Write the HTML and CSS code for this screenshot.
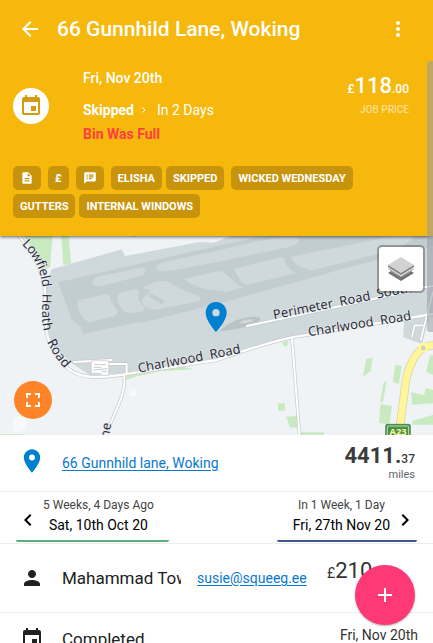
FILE: index.html
```html
<!DOCTYPE html>
<html lang="en">
<head>
<meta charset="utf-8">
<meta name="viewport" content="width=device-width, initial-scale=1">
<title>66 Gunnhild Lane, Woking</title>
<link rel="stylesheet" href="styles.css">
</head>
<body>
<header class="header">
  <div class="bar">
    <button class="icon-button" aria-label="Back"><svg width="24" height="24" viewBox="0 0 24 24" fill="currentColor"><path d="M20 11H7.83l5.59-5.59L12 4l-8 8 8 8 1.41-1.41L7.83 13H20z"/></svg></button>
    <h1 class="title">66 Gunnhild Lane, Woking</h1>
    <button class="icon-button" aria-label="More"><svg width="24" height="24" viewBox="0 0 24 24" fill="currentColor"><circle cx="12" cy="6" r="2"/><circle cx="12" cy="12" r="2"/><circle cx="12" cy="18" r="2"/></svg></button>
  </div>
  <section class="job">
    <span class="job-icon"><svg width="24" height="24" viewBox="0 0 24 24" fill="currentColor"><path d="M17 12h-5v5h5v-5zM16 1v2H8V1H6v2H5c-1.11 0-2 .9-2 2v14c0 1.1.89 2 2 2h14c1.1 0 2-.9 2-2V5c0-1.1-.9-2-2-2h-1V1h-2zm3 18H5V8h14v11z"/></svg></span>
    <div class="job-text">
      <p class="job-date">Fri, Nov 20th</p>
      <p class="job-state"><b>Skipped</b><svg width="6" height="8" viewBox="0 0 6 8" fill="none" stroke="currentColor"><path d="M1.500 1.500 4 4 1.500 6.500"/></svg><span>In 2 Days</span></p>
      <p class="job-reason">Bin Was Full</p>
    </div>
    <div class="price">
      <p class="price-value"><small>£</small>118<small>.00</small></p>
      <p class="price-label">JOB PRICE</p>
    </div>
  </section>
  <div class="tags">
    <span class="tag tag-icon"><svg width="14" height="14" viewBox="0 0 24 24" fill="currentColor"><path d="M14 2H6c-1.1 0-2 .9-2 2v16c0 1.100.9 2 2 2h12c1.100 0 2-.9 2-2V8l-6-6zm2 16H8v-2h8v2zm0-4H8v-2h8v2zm-3-5V3.500L18.500 9H13z"/></svg></span>
    <span class="tag tag-end">£</span>
    <span class="tag tag-icon"><svg width="14" height="14" viewBox="0 0 24 24" fill="currentColor"><path d="M20 2H4c-1.100 0-2 .9-2 2v18l4-4h14c1.100 0 2-.9 2-2V4c0-1.100-.9-2-2-2zM8 14H6v-2h2v2zm0-3H6V9h2v2zm0-3H6V6h2v2zm7 6h-5v-2h5v2zm3-3h-8V9h8v2zm0-3h-8V6h8v2z"/></svg></span>
    <span class="tag">ELISHA</span>
    <span class="tag tag-end">SKIPPED</span>
    <span class="tag">WICKED WEDNESDAY</span>
    <span class="tag">GUTTERS</span>
    <span class="tag">INTERNAL WINDOWS</span>
  </div>
</header>

<section class="map" aria-label="Map">
  <svg class="map-canvas" viewBox="0 18 1299 597" preserveAspectRatio="xMidYMid slice">
    <defs>
      <path id="lowfield" d="M72 36C108 72 132 110 138 172L136 260C138 300 146 324 156 342C170 372 190 400 230 436"/>
      <path id="charlwood-west" d="M416 428 730 368"/>
      <path id="charlwood-east" d="M926 319 1250 267"/>
      <path id="perimeter" d="M822 268 1270 178"/>
    </defs>
    <rect width="1299" height="640" fill="#eff3f6"/>
    <g fill="#c9eac0">
      <path d="M72 18H158L150 112 128 122 112 80ZM184 18H206L214 102 190 104ZM398 18H408L406 22H396ZM376 436 540 408 580 418 480 424 400 442 376 452ZM0 613H72V620H0Z"/>
      <path d="M843 338 866 332 864 344 855 350ZM834 520H855V542H834ZM858 560 892 558 893 594 870 592ZM900 607H972V620H900ZM1099 386 1118 384 1112 424 1088 440ZM1186 404 1206 407 1196 462 1178 455ZM1215 410 1230 412 1204 530 1196 528ZM1152 454 1160 456 1148 518 1140 514ZM1141 522 1176 528 1168 584 1137 578ZM1290 376H1299V434L1278 426ZM1234 486 1272 496 1278 474 1299 480V520L1236 524ZM1236 574 1299 554V584H1238Z"/>
    </g>
    <path fill="#cfd8db" d="M155 118 365 58 376 78 600 36 640 38 694 18H1299V262L1283 255 876 322 800 340 651 392 380 430 270 436 215 400 160 350 140 300 130 190Z"/>
    <path fill="#cfd8db" d="M1212 266 1290 252 1266 342 1210 322Z"/>
    <path fill="#c2cdd0" d="M175 157 651 48 790 18H1190L1299 18V48L1060 108 651 222 418 280 416 276 250 312 240 288 216 270 190 200Z"/>
    <g fill="#cfd8db">
      <path d="M278 158C276 146 290 140 306 137L420 114C436 112 442 118 436 126C430 138 420 140 396 144L306 168C288 170 280 168 278 158Z"/>
      <path d="M232 218C232 214 238 210 248 208L318 193C328 192 330 200 334 214L352 242C354 252 348 258 338 260L270 276C252 278 232 236 232 218Z"/>
      <path d="M352 206C350 194 358 188 368 186L404 178C414 176 418 182 416 190C412 202 416 212 428 226L434 242 400 250C370 254 356 226 352 206Z"/>
      <path d="M426 212C426 202 452 186 452 182C450 176 428 180 432 172C440 164 458 158 476 154C500 150 516 160 540 176L596 198C608 206 600 214 586 216L470 238C448 242 428 230 426 212Z"/>
      <path d="M470 120C464 104 480 100 510 92L651 62 770 34 850 22C920 18 900 40 870 50L680 90 540 118C510 124 484 126 470 120Z"/>
      <path d="M550 148 660 122C690 134 700 160 730 172L680 186 620 178C590 174 568 156 550 148Z"/>
      <path d="M700 116 850 80C862 98 850 110 890 130L740 164C716 156 714 132 700 116Z"/>
      <path d="M872 80 1180 18H1246L1206 54 930 122C890 110 880 96 872 80Z"/>
    </g>
    <path d="M450 194 490 218M856 78C862 104 884 116 920 122M1196 64 1256 20" stroke="#c2cdd0" stroke-width="12" fill="none"/>
    <path fill="#b9c2c5" d="M660 304C680 280 720 262 760 260C790 260 786 272 760 282C740 292 700 300 660 304Z"/>
    <path fill="#cfd8db" d="M716 280C728 270 744 268 758 268C762 274 742 282 716 280Z"/>
    <g fill="none" stroke="#c7c9ca" stroke-linecap="round" stroke-linejoin="round">
      <path stroke-width="11" d="M56 16C90 60 126 110 134 172L138 290C144 360 196 436 270 440C340 444 390 430 430 424L651 390C720 366 800 338 876 322L1299 252"/>
      <path stroke-width="10" d="M372 434C382 490 340 550 316 620M876 326 899 620M222 396 336 390M328 402H380V432M1299 168 1270 172M741 288 1200 190"/>
      <path stroke-width="9" d="M1299 186 1262 330M1236 320 1244 286H1268"/>
    </g>
    <g fill="none" stroke="#fff" stroke-linecap="round" stroke-linejoin="round">
      <path stroke-width="7" d="M56 16C90 60 126 110 134 172L138 290C144 360 196 436 270 440C340 444 390 430 430 424L651 390C720 366 800 338 876 322L1299 252"/>
      <path stroke-width="6" d="M372 434C382 490 340 550 316 620M876 326 899 620M222 396 336 390M328 402H380V432M1299 168 1270 172M741 288 1200 190"/>
      <path stroke-width="5" d="M1299 186 1262 330M1236 320 1244 286H1268"/>
    </g>
    <path fill="#fff" stroke="#c7c9ca" stroke-width="2" d="M274 392H326V436H310L300 430H274Z"/>
    <path fill="none" stroke="#c7c9ca" stroke-width="3" d="M282 404H318M282 412H304M280 420 322 416M304 424H322"/>
    <path fill="#f6f8fa" d="M388 476H410V498H388ZM40 562 78 560V598L36 612Z"/>
    <path fill="none" stroke="#d6d1a0" stroke-width="25" d="M1299 346C1250 348 1230 400 1218 450L1196 620"/>
    <path fill="none" stroke="#fff59b" stroke-width="21" d="M1299 346C1250 348 1230 400 1218 450L1196 620"/>
    <circle cx="1270" cy="353" r="15" fill="#fff59b"/>
    <circle cx="1270" cy="354" r="5" fill="#cfd8db" stroke="#aeb0a0" stroke-width="2"/>
    <rect x="1157" y="583" width="74" height="46" rx="5" fill="#48914a" stroke="#34723a" stroke-width="2"/>
    <rect x="1162" y="588" width="64" height="40" rx="3" fill="none" stroke="#fff" stroke-width="2"/>
    <text class="road-number" x="1194" y="615">A23</text>
    <g class="road-name">
      <text dy="10"><textPath href="#lowfield">Lowfield &#160;Heath &#160;&#160;Road</textPath></text>
      <text><textPath href="#charlwood-west">Charlwood &#160;Road</textPath></text>
      <text><textPath href="#charlwood-east">Charlwood &#160;Road</textPath></text>
      <text><textPath href="#perimeter">Perimeter &#160;Road &#160;South</textPath></text>
      <text transform="translate(326 626) rotate(-80)">ne</text>
    </g>
    <path fill="#0080d0" d="M648 216C630 216 617 230 617 248C617 272 648 306 648 306S680 272 680 248C680 230 666 216 648 216ZM648 259A11 11 0 1 1 648 237A11 11 0 0 1 648 259Z"/>
  </svg>
  <button class="layers" aria-label="Layers"><svg width="26" height="26" viewBox="0 0 26 26"><path fill="#747474" d="M0 17 3 15 13 21 23 15 26 17 13 25Z"/><path fill="#9b9b9b" d="M0 13 3 11 13 17 23 11 26 13 13 21Z"/><path fill="#fff" d="M0 11 13 19 26 11V12L13 20 0 12Z"/><path fill="#d2d2d2" d="M0 9 13 1 26 9 13 17Z"/><path fill="#858585" d="M0 9 13 17 26 9V11L13 19 0 11Z"/></svg></button>
  <button class="expand" aria-label="Full screen"><svg width="24" height="24" viewBox="0 0 24 24" fill="currentColor"><path d="M7 14H5v5h5v-2H7v-3zm-2-4h2V7h3V5H5v5zm12 7h-3v2h5v-5h-2v3zM14 5v2h3v3h2V5h-5z"/></svg></button>
</section>

<main class="list">
  <section class="row address-row">
    <svg class="row-icon" width="28" height="28" viewBox="0 0 24 24" fill="#0080d0"><path d="M12 2C8.130 2 5 5.130 5 9c0 5.250 7 13 7 13s7-7.750 7-13c0-3.870-3.130-7-7-7zm0 9.500a2.500 2.500 0 0 1 0-5 2.500 2.500 0 0 1 0 5z"/></svg>
    <a class="link" href="#">66 Gunnhild lane, Woking</a>
    <div class="distance"><p class="distance-value">4411.<small>37</small></p><p class="distance-unit">miles</p></div>
  </section>
  <nav class="row visits">
    <button class="visit visit-last">
      <svg width="24" height="24" viewBox="0 0 24 24"><path d="M15.410 7.410 14 6l-6 6 6 6 1.410-1.410L10.830 12z"/></svg>
      <span class="visit-text"><span class="visit-ago">5 Weeks, 4 Days Ago</span><span>Sat, 10th Oct 20</span></span>
    </button>
    <button class="visit visit-next">
      <span class="visit-text"><span class="visit-ago">In 1 Week, 1 Day</span><span>Fri, 27th Nov 20</span></span>
      <svg width="24" height="24" viewBox="0 0 24 24"><path d="M10 6 8.590 7.410 13.170 12l-4.580 4.590L10 18l6-6z"/></svg>
    </button>
  </nav>
  <section class="row contact-row">
    <svg class="row-icon" width="24" height="24" viewBox="0 0 24 24" fill="#212121"><path d="M12 12c2.210 0 4-1.790 4-4s-1.790-4-4-4-4 1.790-4 4 1.790 4 4 4zm0 2c-2.670 0-8 1.340-8 4v2h16v-2c0-2.660-5.330-4-8-4z"/></svg>
    <span class="row-title contact-name">Mahammad Towne</span>
    <a class="link" href="#">susie@squeeg.ee</a>
    <p class="balance"><small>£</small>210<small class="pence">.00</small></p>
  </section>
  <section class="row status-row">
    <svg class="row-icon" width="24" height="24" viewBox="0 0 24 24" fill="#212121"><path d="M17 12h-5v5h5v-5zM16 1v2H8V1H6v2H5c-1.110 0-2 .9-2 2v14c0 1.100.89 2 2 2h14c1.100 0 2-.9 2-2V5c0-1.100-.9-2-2-2h-1V1h-2zm3 18H5V8h14v11z"/></svg>
    <span class="row-title">Completed</span>
    <span class="status-date">Fri, Nov 20th</span>
  </section>
</main>
<button class="fab" aria-label="Add"><svg width="24" height="24" viewBox="0 0 24 24" fill="currentColor"><path d="M19 13h-6v6h-2v-6H5v-2h6V5h2v6h6z"/></svg></button>
<div class="scroll-thumb"></div>
</body>
</html>
```
FILE: styles.css
```css
* { box-sizing: border-box; }
body {
  margin: 0;
  height: 100vh;
  display: flex;
  flex-direction: column;
  overflow: hidden;
  position: relative;
  background: #fff;
  color: #212121;
  font-family: Roboto, "Liberation Sans", sans-serif;
  font-size: 14px;
}
p, h1 { margin: 0; }
svg { display: block; flex: none; }
button {
  font: inherit;
  color: inherit;
  border: 0;
  padding: 0;
  background: none;
}

.header {
  flex: none;
  position: relative;
  z-index: 1;
  padding-bottom: 18px;
  background: #f6b80c;
  color: #fff;
  box-shadow: 0 1px 3px rgba(0, 0, 0, .6);
}
.bar {
  display: flex;
  align-items: center;
  height: 58px;
  padding: 0 23px 0 18px;
}
.title {
  flex: 1;
  margin-left: 15px;
  font-size: 21px;
  font-weight: 500;
  white-space: nowrap;
}
.job {
  display: flex;
  align-items: center;
  padding: 8px 24px 0 13px;
  line-height: 24px;
}
.job-icon {
  display: grid;
  place-items: center;
  width: 36px;
  height: 36px;
  border-radius: 50%;
  background: #fff;
  color: #d39c0c;
}
.job-text { flex: 1; margin-left: 34px; }
.job-date { font-weight: 500; margin-bottom: 8px; }
.job-state { display: flex; align-items: center; }
.job-state b { font-weight: 700; }
.job-state svg { margin: 0 10px 0 7px; }
.job-reason { color: #ff4040; font-weight: 700; }
.price { align-self: flex-start; text-align: right; margin-top: 8px; }
.price-value { font-size: 22px; font-weight: 500; }
.price-value small { font-size: 12px; }
.price-label {
  font-size: 10px;
  line-height: 18px;
  font-weight: 500;
  color: rgba(255, 255, 255, .55);
}
.tags {
  display: flex;
  flex-wrap: wrap;
  gap: 4px;
  padding: 20px 24px 0 13px;
}
.tag {
  display: flex;
  align-items: center;
  height: 24px;
  padding: 0 7px;
  border-radius: 5px;
  background: #c8940c;
  font-size: 11px;
  font-weight: 700;
}
.tag-icon, .tag-end { margin-right: 3px; }

.map {
  flex: none;
  position: relative;
  height: 199px;
  overflow: hidden;
}
.map-canvas { width: 100%; height: 100%; }
.road-name text {
  font-family: "Noto Sans", "Open Sans", sans-serif;
  font-size: 39px;
  fill: #2d2d3a;
  stroke: #e8edf0;
  stroke-width: 4px;
  paint-order: stroke;
}
.road-number {
  font-family: "Noto Sans", sans-serif;
  font-size: 28px;
  font-weight: 700;
  fill: #fff59b;
  text-anchor: middle;
}
.layers, .expand {
  position: absolute;
  display: grid;
  place-items: center;
}
.layers {
  top: 9px;
  right: 8px;
  width: 48px;
  height: 48px;
  border: 2px solid rgba(0, 0, 0, .3);
  border-radius: 5px;
  background: #fff;
  background-clip: padding-box;
}
.expand {
  left: 14px;
  bottom: 16px;
  width: 38px;
  height: 38px;
  border-radius: 50%;
  background: #ff8429;
  color: #fff;
}

.row {
  display: flex;
  align-items: center;
  border-bottom: 1px solid #eee;
}
.row-icon { margin-right: 18px; }
.row-title { font-size: 17px; white-space: nowrap; }
.link { color: #0878cc; text-underline-offset: 2px; }
.address-row { height: 57px; padding: 0 18px; }
.address-row .row-icon { margin: 0 16px 4px 0; }
.distance { margin-left: auto; text-align: right; color: #3b3b3b; }
.distance-value { font-size: 22px; line-height: 20px; font-weight: 700; }
.distance-value small { font-size: 12px; font-weight: 500; }
.distance-unit { font-size: 11px; line-height: 12px; color: #666; }

.visits { justify-content: space-between; height: 52px; padding: 0 16px; }
.visit {
  display: flex;
  align-items: center;
  height: 48px;
  border-bottom: 2px solid;
  border-radius: 2px;
  color: #000;
}
.visit-last { border-color: #5aae7c; padding-right: 15px; }
.visit-next { border-color: #3f5990; padding-left: 16px; }
.visit svg { margin-top: 6px; }
.visit-last svg { margin-right: 3px; }
.visit-next svg { margin-left: 3px; }
.visit-text {
  display: flex;
  flex-direction: column;
  align-items: center;
  line-height: 20px;
  padding-bottom: 4px;
}
.visit-ago { font-size: 12px; color: #444; }

.contact-row { height: 69px; padding: 0 20px; }
.contact-name { width: 119px; margin-right: 16px; overflow: hidden; }
.balance {
  margin: 0 24px 16px auto;
  font-size: 22px;
  color: #333;
}
.balance small { font-size: 14px; }
.balance .pence { font-size: 12px; }
.status-row { padding: 14px 15px 14px 20px; }
.status-date {
  position: relative;
  z-index: 3;
  margin-left: auto;
  margin-bottom: 8px;
  color: #333;
}

.fab {
  position: absolute;
  z-index: 2;
  right: 18px;
  bottom: 18px;
  display: grid;
  place-items: center;
  width: 60px;
  height: 60px;
  border-radius: 50%;
  background: #ff3975;
  color: #fff;
  box-shadow: 0 1px 2px rgba(0, 0, 0, .3);
}
.scroll-thumb {
  position: absolute;
  z-index: 2;
  top: 61px;
  right: 0;
  width: 6px;
  height: 271px;
  border-radius: 3px 0 0 3px;
  background: rgba(150, 155, 165, .55);
}
```
